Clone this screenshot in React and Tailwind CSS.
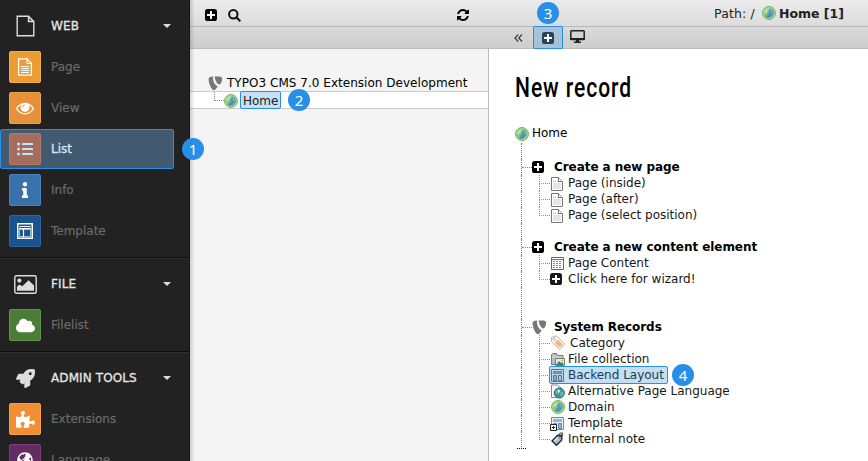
import React from "react";
import { FaListUl, FaInfo, FaCloud, FaRocket, FaPuzzlePiece, FaGlobeAmericas } from "react-icons/fa";

function Plus({ className = "text-black" }) {
  return (
    <svg className={`block shrink-0 ${className}`} width="12" height="12" viewBox="0 0 12 12">
      <rect width="12" height="12" rx="2.6" fill="currentColor" />
      <path d="M6 2v8M2 6h8" stroke="#fff" strokeWidth="2" />
    </svg>
  );
}

function Globe({ className = "" }) {
  return (
    <svg className={`block shrink-0 ${className}`} width="14" height="14" viewBox="0 0 14 14">
      <circle cx="7" cy="7" r="6.400" fill="#b5dfa6" stroke="#5fae56" strokeWidth="1" />
      <circle cx="7" cy="7" r="5.300" fill="#83c383" />
      <path d="M2.500 4.500Q4.500 1.800 7.500 2L6 4.500 4.500 7 2 7.500Z" fill="#b9e0a4" />
      <path d="M8 3.500l2.500.2 1 2.800-1.200 3L8 11.500 6 11 5 8.800l2-1.300L6.500 6Z" fill="#4f90bf" />
      <path d="M8 5l2-1 1 2.500-2 1Z" fill="#6fb0cf" />
      <path d="M3.800 9.800l2 .5 1 2-2-.7Z" fill="#4c9a56" />
    </svg>
  );
}

function Typo3() {
  return (
    <svg className="block shrink-0 text-[#777]" width="15" height="15" viewBox="0 0 15 15" fill="currentColor">
      <path d="M1.200 1.500Q2.500.7 5.200.5C4.400 4.500 6.600 9.200 9.700 10.200 8.700 12.500 7 14.200 5.800 14.200 3.900 14.200.6 7.600.6 3.400.6 2.300.8 1.900 1.200 1.500Z" />
      <path d="M6.700.6c4.500-.3 7.500 0 7.500 2 0 2.500-1.400 5.800-2.700 5.900C9.300 8.500 7 4.600 6.700.6Z" />
    </svg>
  );
}

function Doc() {
  return (
    <svg className="block shrink-0" width="14" height="15" viewBox="0 0 14 15">
      <path d="M1.500 1.500h7l4 4v9h-11z" fill="#fff" stroke="#777" />
      <path d="M3 7h8v6H3z" fill="#e4e4e4" />
      <path d="M3 5.500h5" stroke="#bbb" strokeDasharray="1 1" />
      <path d="M8.500 1.500v4h4" fill="#eee" stroke="#777" />
    </svg>
  );
}

function ContentIcon() {
  return (
    <svg className="block shrink-0" width="15" height="15" viewBox="0 0 15 15">
      <path d="M1.500 1.500h12v12h-12z" fill="#fff" stroke="#666" />
      <path d="M2 3.500h11" stroke="#777" />
      <path d="M3 5.500h9M3 7.500h9M3 9.500h9M3 11.500h9" stroke="#888" strokeDasharray="2 1" />
    </svg>
  );
}

function Tag() {
  return (
    <svg className="block shrink-0" width="17" height="16" viewBox="0 0 17 16">
      <path d="M1.500 2.500 6.500 1l8.500 8-5.500 5.500L1.500 6.500z" fill="#fdfaf7" stroke="#bdb7b1" />
      <path d="M7.500 4.500 13 9.500l-3.500 3.300L4.500 8z" fill="#f8b483" />
      <circle cx="4.200" cy="4.200" r="1.200" fill="#fff" stroke="#aaa" strokeWidth=".8" />
    </svg>
  );
}

function Collection() {
  return (
    <svg className="block shrink-0" width="15" height="15" viewBox="0 0 15 15">
      <path d="M1.500 12.500v-10l1-1h4l1 2h5.500v9z" fill="#bbb" stroke="#777" />
      <path d="M2.500 5h10" stroke="#ddd" />
      <path d="M5.500 6.500h9v7h-9z" fill="#dceef9" stroke="#777" />
      <path d="m6 13 3-4 2 2 1-1 2 3z" fill="#3c8b45" />
      <circle cx="12" cy="8.500" r="1" fill="#d6b22c" />
    </svg>
  );
}

function LayoutIcon({ blue }) {
  const ink = blue ? "#5c8cc0" : "#55778f";
  return (
    <svg className="block shrink-0 overflow-visible" width="15" height="15" viewBox="0 0 15 15">
      <path d="M1.500 1.500h12v12h-12z" fill={blue ? "#eaf3fb" : "#b7d3e8"} stroke={ink} />
      <path d="M3 3h9v3H3z" fill={blue ? "#8fb5dc" : "#6b8fac"} />
      <path d="M3.500 7.500h3v5h-3z" fill={blue ? "#bed5ed" : "#8cabc2"} stroke={ink} />
      <path d="M8.500 7.500h3v5h-3z" fill={blue ? "#8db2dc" : "#a8c6db"} stroke={ink} />
      {blue && <path d="M.5 8.500h6v6h-6z" fill="#fff" stroke="#222" />}
      {blue && <path d="M3.500 10v3M2 11.500h3" stroke="#222" />}
    </svg>
  );
}

function LanguageIcon() {
  return (
    <svg className="block shrink-0" width="15" height="15" viewBox="0 0 15 15">
      <path d="M1.500 1h6l3.500 3v9.500h-9.500z" fill="#fff" stroke="#888" />
      <circle cx="9.300" cy="9" r="5.100" fill="#3f8fd0" stroke="#24699f" />
      <path d="M5 8l3-3 2 1-1 3-3 1zM10 9l3-2 1 3-3 3z" fill="#63c457" />
      <path d="M7.500 5.500l3 1-2 3z" fill="#d8f0ff" />
      <path d="M7 11l2-.5 1.500 2-2 .8z" fill="#3f9e3d" />
    </svg>
  );
}

function NoteIcon() {
  return (
    <svg className="block shrink-0" width="15" height="16" viewBox="0 0 15 16">
      <path d="M7.500 4.500 12 4.200 11.800 9 6.500 14.300 2 10z" fill="#a9bfd0" stroke="#1c2226" strokeWidth="1.300" />
      <path d="M8 6.500 4.200 10" stroke="#e7f1f7" strokeWidth="1.300" />
      <circle cx="10" cy="6.200" r="1" fill="#fff" stroke="#222" strokeWidth=".7" />
      <path d="M8.500 3.500Q11 1 12.500 2.200q.8 1-1.500 3.300" fill="none" stroke="#222" />
    </svg>
  );
}

function Eye() {
  return (
    <svg width="18" height="18" viewBox="0 0 1792 1792" fill="currentColor">
      <path d="M1664 960q-152-236-381-353 61 104 61 225 0 185-131.500 316.500t-316.500 131.500-316.500-131.500-131.500-316.500q0-121 61-225-229 117-381 353 133 205 333.500 326.500t434.500 121.500 434.500-121.500 333.500-326.500zm-720-384q0-20-14-34t-34-14q-125 0-214.500 89.500t-89.500 214.500q0 20 14 34t34 14 34-14 14-34q0-86 61-147t147-61q20 0 34-14t14-34zm848 384q0 34-20 69-140 230-376.500 368.500t-499.500 138.500-499.500-139-376.500-368q-20-35-20-69t20-69q140-229 376.500-368t499.500-139 499.500 139 376.500 368q20 35 20 69z" />
      <circle cx="896" cy="832" r="400" />
      <path d="M650 830q0-240 246-240" fill="none" stroke="#e69138" strokeWidth="90" />
    </svg>
  );
}

function Refresh() {
  return (
    <svg className="block" width="12" height="12" viewBox="0 0 1536 1536" fill="currentColor">
      <path transform="translate(-128 -128)" d="M1639 1056q0 5-1 7-64 268-268 434.500t-478 166.500q-146 0-282.500-55t-243.500-157l-129 129q-19 19-45 19t-45-19-19-45v-448q0-26 19-45t45-19h448q26 0 45 19t19 45-19 45l-137 137q71 66 161 102t187 36q134 0 250-65t186-179q11-17 53-117 8-23 30-23h192q13 0 22.500 9.500t9.500 22.500zm25-800v448q0 26-19 45t-45 19h-448q-26 0-45-19t-19-45 19-45l138-138q-148-137-349-137-134 0-250 65t-186 179q-11 17-53 117-8 23-30 23h-199q-13 0-22.500-9.500t-9.500-22.500v-7q65-268 270-434.500t480-166.500q146 0 284 55.500t245 156.500l130-129q19-19 45-19t45 19 19 45z" />
    </svg>
  );
}

const pageIcon = (
  <svg width="16" height="18" viewBox="0 0 16 18" fill="none" stroke="#fff">
    <path d="M1.600.9h8.400l4.400 4.400v11.800H1.600z" strokeWidth="1.300" />
    <path d="M10 1v4.500h4.400" />
    <path d="M4 8.500h8M4 10.500h8M4 12.500h8M4 14.500h8" />
  </svg>
);

const templateIcon = (
  <svg width="16" height="16" viewBox="0 0 16 16" fill="none" stroke="#fff">
    <path d="M.75.75h14.500v14.500H.75z" strokeWidth="1.500" />
    <path d="M2.500 3.500h11" />
    <path d="M2 5.500h12M6.500 5.500v9" strokeWidth="1.200" />
    <path d="M2.500 6.500v7h11v-7z" strokeWidth=".6" />
  </svg>
);

const fileHead = (
  <svg width="19" height="22" viewBox="0 0 19 22" fill="none" stroke="#ddd" strokeWidth="1.400">
    <path d="M1.200 1.200h11.300l5.300 5.300v14.300H1.200z" />
    <path d="M12.500 1.200v5.300h5.300" fill="#ddd" fillOpacity=".25" />
  </svg>
);

const imageHead = (
  <svg width="23" height="19" viewBox="0 0 23 19">
    <rect x=".8" y=".8" width="21.400" height="17.400" rx="1.500" fill="none" stroke="#ddd" strokeWidth="1.400" />
    <circle cx="5.400" cy="5.600" r="2.100" fill="#ddd" />
    <path d="M3 15.800v-4l2.300-2.300 3 1.800L14.500 5.200l5.500 5.300v5.300z" fill="#ddd" />
  </svg>
);

function Head({ icon, label, className = "" }) {
  return (
    <div className={`flex h-[51px] items-center ${className}`}>
      <span className="flex w-[50px] items-center justify-center text-[#ddd]">{icon}</span>
      <span className="ml-px w-[110px] text-[12px] tracking-[0.1px] text-[#e6e6e6] [-webkit-text-stroke:0.3px_#e6e6e6]">{label}</span>
      <svg className="ml-[2px]" width="8" height="4" viewBox="0 0 8 4"><path d="M0 0h8L4 4z" fill="#ddd" /></svg>
    </div>
  );
}

function Item({ icon, label, tile, active }) {
  return (
    <div className={`flex h-10 w-[174px] shrink-0 items-center rounded-[2px] border pl-2 ${active ? "border-[#288fe8] bg-[#415a6f]" : "border-transparent"}`}>
      <span className={`flex size-8 items-center justify-center rounded-[2px] border ${tile} ${active ? "text-[#c5e2fb]" : "text-white"}`}>{icon}</span>
      <span className={`ml-[10px] text-[12px] ${active ? "text-[#d2e8fb] [-webkit-text-stroke:0.3px_#d2e8fb]" : "text-[#6b6b6b] [-webkit-text-stroke:0.2px_#6b6b6b]"}`}>{label}</span>
    </div>
  );
}

function Sidebar() {
  return (
    <nav className="h-full w-[190px] shrink-0 overflow-hidden border-r border-[#161616] bg-[#222]">
      <section className="h-[257px]">
        <Head icon={fileHead} label="WEB" />
        <div className="-mt-1 flex flex-col gap-px">
          <Item icon={pageIcon} label="Page" tile="bg-[#eb9d34] border-[#efab4c]" />
          <Item icon={<Eye />} label="View" tile="bg-[#e69138] border-[#eba055]" />
          <Item icon={<FaListUl size={16} />} label="List" tile="bg-[#a56d5e] border-[#b57a69]" active />
          <Item icon={<FaInfo size={16} />} label="Info" tile="bg-[#3971ad] border-[#4d82b9]" />
          <Item icon={templateIcon} label="Template" tile="bg-[#19548f] border-[#2d659c]" />
        </div>
      </section>
      <section className="h-[94px] border-t border-[#0c0c0c]">
        <Head icon={imageHead} label="FILE" className="border-t border-[#303030]" />
        <div className="-mt-1"><Item icon={<FaCloud size={19} />} label="Filelist" tile="bg-[#4b7d39] border-[#609251]" /></div>
      </section>
      <section className="border-t border-[#0c0c0c]">
        <Head icon={<FaRocket size={19} />} label="ADMIN TOOLS" className="border-t border-[#303030]" />
        <div className="-mt-1 flex flex-col gap-px">
          <Item icon={<FaPuzzlePiece size={19} />} label="Extensions" tile="bg-[#f18d33] border-[#f59d50]" />
          <Item icon={<FaGlobeAmericas size={16} />} label="Language" tile="bg-[#632c62] border-[#774175]" />
        </div>
      </section>
    </nav>
  );
}

function Badge({ children, className }) {
  return <span className={`absolute flex size-[22px] items-center justify-center rounded-full bg-[#288fe8] font-['Noto_Sans',sans-serif] text-[15px] leading-none text-white ${className}`}>{children}</span>;
}

function Group({ icon, title }) {
  return (
    <div className="flex h-4 items-center">
      <div className="h-4 w-[11px] shrink-0 border-l border-dotted border-[#777]">
        <div className="h-[9px] border-b border-dotted border-[#888]" />
      </div>
      <span className="flex w-[22px] items-center">{icon}</span>
      <b className="text-[12px] leading-4 tracking-[-0.06px] text-black">{title}</b>
    </div>
  );
}

function Leaf({ icon, label, last, highlight, wide }) {
  return (
    <div className="flex h-4 items-center">
      <div className="h-4 w-[18px] shrink-0 border-l border-dotted border-[#777]" />
      <div className="flex h-4 w-[11px] shrink-0 flex-col">
        <div className="h-[9px] border-b border-l border-dotted border-[#888]" />
        {!last && <div className="h-[7px] border-l border-dotted border-[#888]" />}
      </div>
      <div className={`flex items-center ${highlight ? "-ml-px h-[18px] rounded-[2px] border border-[#288fe8] bg-[#c4def4] pr-[3px]" : "h-4"}`}>
        <span className={`flex items-center ${wide ? "w-5" : "w-[18px]"}`}>{icon}</span>
        <span className={`text-[12px] leading-4 ${highlight ? "text-[#203b50]" : "text-[#171717]"}`}>{label}</span>
      </div>
    </div>
  );
}

function Gap({ className }) {
  return <div className={`border-l border-dotted border-[#777] ${className}`} />;
}

export default function App() {
  return (
    <div className="relative flex h-[461px] w-[868px] overflow-hidden bg-white font-['DejaVu_Sans',sans-serif] text-[12px] text-black">
      <Sidebar />
      <div className="flex min-w-0 flex-1 flex-col">
        <header className="flex h-[27px] shrink-0 items-center border-b border-[#b9b9b9] bg-linear-to-b from-[#ebebeb] to-[#dcdcdc] pt-[4px] pl-[15px]">
          <Plus />
          <svg className="ml-[11px]" width="13" height="13" viewBox="0 0 13 13" fill="none" stroke="#111" strokeWidth="2"><circle cx="5.300" cy="5.300" r="4.200" /><path d="m8.300 8.300 4 4" /></svg>
          <span className="ml-[216px]"><Refresh /></span>
          <div className="mr-[24px] ml-auto -mt-[2px] flex items-center text-[12.500px] text-[#222]">
            <span className="mt-px tracking-[0.15px]">Path: /</span><Globe className="mt-[-2px] mr-[3px] ml-[7px]" /><b>Home [1]</b>
          </div>
        </header>
        <div className="flex h-[22px] shrink-0 items-center border-b border-[#bcbcbc] bg-linear-to-b from-[#dadada] to-[#cdcdcd] pl-[324px]">
          <svg width="9" height="8" viewBox="0 0 9 8" fill="none" stroke="#333" strokeWidth="1.100"><path d="M4.200.5.9 4l3.300 3.500M8 .5 4.700 4 8 7.500" /></svg>
          <div className="ml-[10px] flex h-[23px] w-[30px] shrink-0 items-center justify-center rounded-[1px] border border-[#288fe8] bg-[#a6c2da]"><Plus className="text-[#2a4357]" /></div>
          <svg className="-mt-[2px] ml-[7px]" width="15" height="13" viewBox="0 0 15 13"><rect x=".8" y=".8" width="13.400" height="8.700" rx=".8" fill="none" stroke="#222" strokeWidth="1.500" /><path d="M0 8h15v2H0zM6 10h3v1.500h2V13H4v-1.500h2z" fill="#222" /></svg>
        </div>
        <div className="flex min-h-0 flex-1">
          <aside className="w-[299px] shrink-0 border-r border-[#bbb] bg-[#f4f4f4]">
            <div className="flex h-[42px] items-end pl-[18px]">
              <Typo3 /><span className="ml-[4px] leading-4 tracking-[0.03px]">TYPO3 CMS 7.0 Extension Development</span>
            </div>
            <div className="flex h-[18px] items-center border-y border-[#ccc] bg-white pl-[24px]">
              <div className="mb-2 h-[9px] w-[10px] border-b border-l border-dotted border-[#888]" />
              <Globe className="mt-px" />
              <div className="ml-[2px] flex h-[18px] items-center rounded-[2px] border border-[#288fe8] bg-[#c6e0f7] px-[2px] pt-[2px] text-[#222]">Home</div>
            </div>
          </aside>
          <main className="flex-1 bg-white pl-[26px]">
            <h1 className="mt-[21px] h-9 w-[150px] origin-left scale-x-[0.78] font-['Roboto',sans-serif] text-[27px] leading-9 font-medium tracking-[1.2px] whitespace-nowrap">New record</h1>
            <div className="mt-[19px] flex h-4 items-center"><Globe className="mt-px" /><span className="ml-[3px]">Home</span></div>
            <div className="pl-[6px]">
              <Gap className="mt-[2px] h-4" />
              <Group icon={<Plus />} title="Create a new page" />
              <Leaf icon={<Doc />} label="Page (inside)" />
              <Leaf icon={<Doc />} label="Page (after)" />
              <Leaf icon={<Doc />} label="Page (select position)" last />
              <Gap className="h-4" />
              <Group icon={<Plus />} title="Create a new content element" />
              <Leaf icon={<ContentIcon />} label="Page Content" />
              <Leaf icon={<Plus className="text-[#1a1a1a]" />} label="Click here for wizard!" last />
              <Gap className="h-8" />
              <Group icon={<Typo3 />} title="System Records" />
              <Leaf icon={<Tag />} label="Category" wide />
              <Leaf icon={<Collection />} label="File collection" />
              <Leaf icon={<LayoutIcon />} label="Backend Layout" highlight />
              <Leaf icon={<LanguageIcon />} label="Alternative Page Language" />
              <Leaf icon={<Globe className="ml-px" />} label="Domain" />
              <Leaf icon={<LayoutIcon blue />} label="Template" />
              <Leaf icon={<NoteIcon />} label="Internal note" last />
            </div>
            <div className="ml-[2px] h-[2px] w-[9px] border-b border-dotted border-[#111]" />
          </main>
        </div>
      </div>
      <div className="absolute top-0 left-[190px] h-full w-[4px] bg-linear-to-r from-black/15 to-black/3" />
      <Badge className="top-[138px] left-[182px]">1</Badge>
      <Badge className="top-[89px] left-[288px]">2</Badge>
      <Badge className="top-[2px] left-[537px]">3</Badge>
      <Badge className="top-[364px] left-[672px]">4</Badge>
    </div>
  );
}
